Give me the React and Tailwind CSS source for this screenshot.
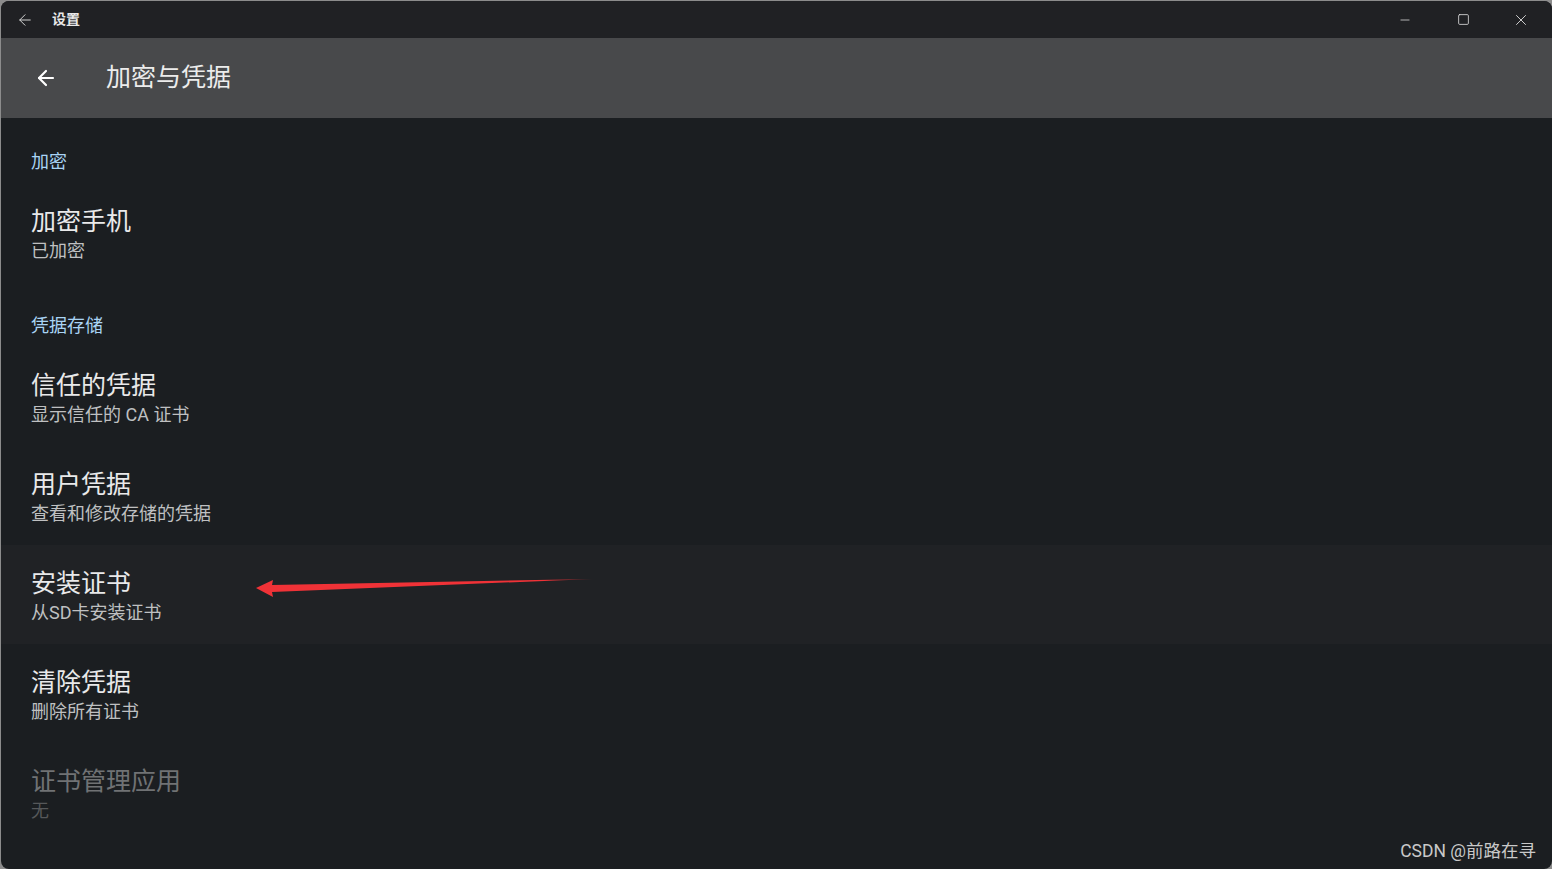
import { ArrowLeft, Minus, Square, X } from 'lucide-react';

const font = { fontFamily: 'Roboto, "Noto Sans CJK SC", sans-serif' };

function SectionHeader({ children }) {
  return (
    <div className="h-[65px] pl-[30px] pt-[32px]">
      <div className="text-[18px] leading-[24px] text-[#a9d4f5]">{children}</div>
    </div>
  );
}

function Row({ title, subtitle, active, disabled }) {
  return (
    <div className={`h-[99px] pl-[30px] pt-[23px] ${active ? 'bg-[#202225]' : ''}`}>
      <div className={`text-[25px] leading-[32px] ${disabled ? 'text-[#707274]' : 'text-[#e9e9ea]'}`}>{title}</div>
      <div className={`text-[18px] leading-[26px] ${disabled ? 'text-[#56585a]' : 'text-[#bfc0c1]'}`}>{subtitle}</div>
    </div>
  );
}

export default function App() {
  return (
    <div className="w-[1552px] h-[869px] bg-[#8c8c8c] pl-px pt-px overflow-hidden" style={font}>
      <div className="relative w-full h-full rounded-lg overflow-hidden bg-[#1b1e21] flex flex-col">
        <div className="h-[37px] bg-[#202124] flex items-center shrink-0">
          <ArrowLeft size={18} strokeWidth={1.3} className="ml-[15px] text-[#d8d8d8]" />
          <span className="ml-[18px] text-[14px] font-semibold text-[#e8e8e8]">设置</span>
          <div className="ml-auto mr-[2px] flex h-full">
            <div className="w-[58px] flex items-center justify-center text-[#e0e0e0]">
              <Minus size={14} strokeWidth={1.3} />
            </div>
            <div className="w-[58px] flex items-center justify-center text-[#e0e0e0]">
              <Square size={13} strokeWidth={1.5} />
            </div>
            <div className="w-[58px] flex items-center justify-center text-[#e0e0e0]">
              <X size={18} strokeWidth={1.2} />
            </div>
          </div>
        </div>
        <div className="h-[80px] bg-[#48494b] flex items-center shrink-0">
          <ArrowLeft size={24} strokeWidth={2.2} className="ml-[33px] text-white" />
          <span className="ml-[48px] text-[25px] text-[#ececec]">加密与凭据</span>
        </div>
        <div className="flex-1">
          <SectionHeader>加密</SectionHeader>
          <Row title="加密手机" subtitle="已加密" />
          <SectionHeader>凭据存储</SectionHeader>
          <Row title="信任的凭据" subtitle="显示信任的 CA 证书" />
          <Row title="用户凭据" subtitle="查看和修改存储的凭据" />
          <Row title="安装证书" subtitle="从SD卡安装证书" active />
          <Row title="清除凭据" subtitle="删除所有证书" />
          <Row title="证书管理应用" subtitle="无" disabled />
        </div>
        <svg className="absolute left-0 top-0 pointer-events-none" width="1551" height="868" viewBox="1 1 1551 868">
          <defs>
            <linearGradient id="shaft" x1="0" x2="1" y1="0" y2="0">
              <stop offset="0" stopColor="#f03237" />
              <stop offset="0.85" stopColor="#f03237" />
              <stop offset="1" stopColor="#f03237" stopOpacity="0.3" />
            </linearGradient>
          </defs>
          <polygon points="256,588 273,580 272,585 593,579 272,592 273,597" fill="url(#shaft)" />
        </svg>
        <div className="absolute right-[16px] bottom-[5px] text-[17.5px] text-[#c9c9c9]">CSDN @前路在寻</div>
      </div>
    </div>
  );
}
